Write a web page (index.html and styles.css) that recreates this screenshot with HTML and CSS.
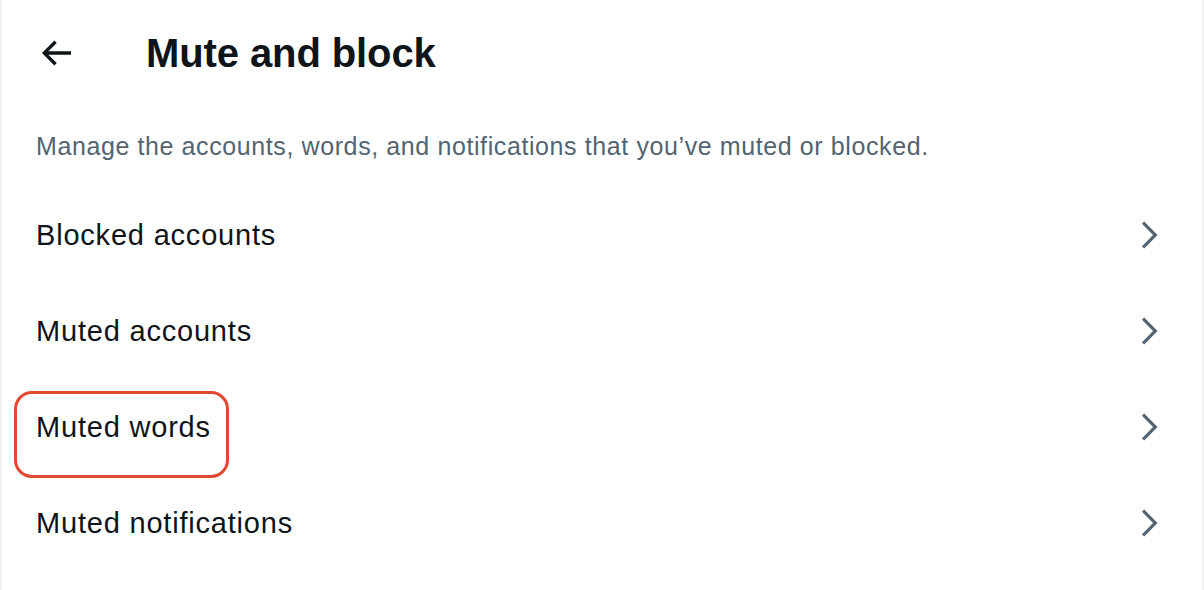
FILE: index.html
```html
<!DOCTYPE html>
<html lang="en">
<head>
<meta charset="utf-8">
<title>Mute and block</title>
<link rel="stylesheet" href="styles.css">
</head>
<body>
<main class="panel">
  <header class="header">
    <span class="back" aria-label="Back">
      <svg viewBox="0 0 24 24" class="back-icon"><path d="M7.414 13l5.043 5.04-1.414 1.42L3.586 12l7.457-7.46 1.414 1.42L7.414 11H21v2H7.414z"/></svg>
    </span>
    <h1 class="title">Mute and block</h1>
  </header>
  <p class="desc">Manage the accounts, words, and notifications that you’ve muted or blocked.</p>
  <ul class="list">
    <li class="row"><span class="label">Blocked accounts</span><svg viewBox="0 0 24 24" class="chev"><path d="M14.586 12L7.543 4.96l1.414-1.42L17.414 12l-8.457 8.46-1.414-1.42L14.586 12z"/></svg></li>
    <li class="row"><span class="label">Muted accounts</span><svg viewBox="0 0 24 24" class="chev"><path d="M14.586 12L7.543 4.96l1.414-1.42L17.414 12l-8.457 8.46-1.414-1.42L14.586 12z"/></svg></li>
    <li class="row"><span class="label">Muted words</span><svg viewBox="0 0 24 24" class="chev"><path d="M14.586 12L7.543 4.96l1.414-1.42L17.414 12l-8.457 8.46-1.414-1.42L14.586 12z"/></svg><span class="highlight"></span></li>
    <li class="row"><span class="label">Muted notifications</span><svg viewBox="0 0 24 24" class="chev"><path d="M14.586 12L7.543 4.96l1.414-1.42L17.414 12l-8.457 8.46-1.414-1.42L14.586 12z"/></svg></li>
  </ul>
</main>
</body>
</html>
```

FILE: styles.css
```css
html, body {
  margin: 0;
  padding: 0;
  background: #ffffff;
}
body {
  font-family: "Liberation Sans", Arial, sans-serif;
  color: #0f1419;
}
.panel {
  box-sizing: border-box;
  width: 1204px;
  height: 590px;
  border-left: 2px solid #eff3f4;
  border-right: 2px solid #eff3f4;
  overflow: hidden;
}
.header {
  height: 106px;
  display: flex;
  align-items: center;
  padding-left: 34px;
}
.back {
  width: 40px;
  height: 40px;
  display: flex;
}
.back-icon {
  width: 40px;
  height: 40px;
  fill: #0f1419;
}
.title {
  margin: 0 0 0 70px;
  font-size: 40px;
  line-height: 48px;
  font-weight: 700;
  letter-spacing: -0.1px;
}
.desc {
  margin: 0;
  padding: 24px 34px 25px;
  font-size: 25px;
  line-height: 32px;
  letter-spacing: 0.6px;
  color: #536471;
}
.list {
  list-style: none;
  margin: 0;
  padding: 0;
}
.row {
  position: relative;
  height: 96px;
  display: flex;
  align-items: center;
  justify-content: space-between;
  padding: 0 34px 0 34px;
}
.label {
  font-size: 29px;
  line-height: 36px;
  letter-spacing: 0.8px;
}
.chev {
  width: 38px;
  height: 38px;
  fill: #536471;
}
.highlight {
  position: absolute;
  left: 12px;
  top: 12px;
  width: 215px;
  height: 87px;
  box-sizing: border-box;
  border: 3px solid #e0492f;
  border-radius: 18px;
}
```
